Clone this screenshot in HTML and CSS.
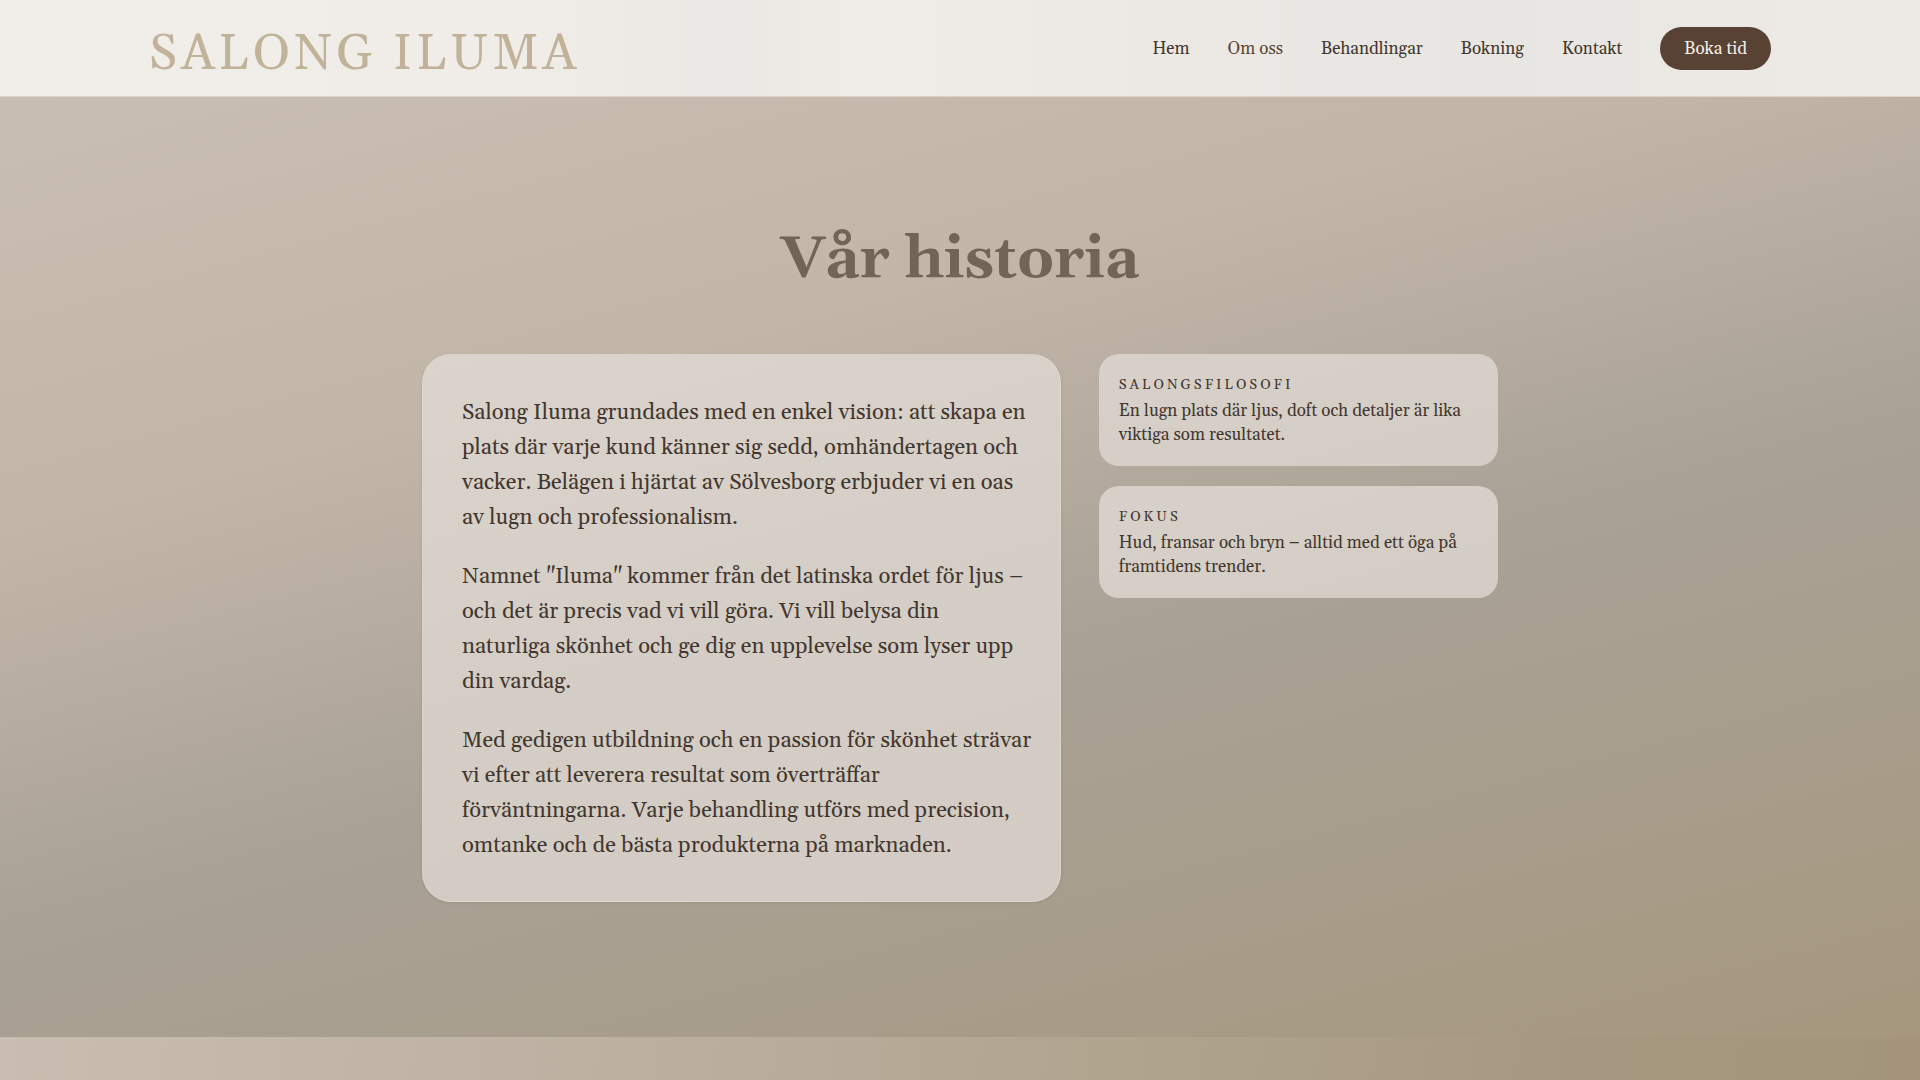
FILE: index.html
```html
<!DOCTYPE html>
<html lang="sv">

<head>
  <meta charset="UTF-8">
  <meta name="viewport" content="width=device-width, initial-scale=1.0">
  <title>Salong Iluma</title>
  <link rel="stylesheet" href="styles.css">
</head>

<body>
  <header class="header">
    <a href="#" class="logo">SALONG ILUMA</a>
    <nav class="nav">
      <a href="#hem">Hem</a>
      <a href="#om-oss" class="active">Om oss</a>
      <a href="#behandlingar">Behandlingar</a>
      <a href="#bokning">Bokning</a>
      <a href="#kontakt">Kontakt</a>
      <a href="#bokning" class="nav-btn">Boka tid</a>
    </nav>
  </header>
  <main>
    <section class="history" id="om-oss">
      <h2>Vår historia</h2>
      <div class="history-grid">
        <article class="story">
          <p>Salong Iluma grundades med en enkel vision: att skapa en plats där varje kund känner sig sedd, omhändertagen och vacker. Belägen i hjärtat av Sölvesborg erbjuder vi en oas av lugn och professionalism.</p>
          <p>Namnet "Iluma" kommer från det latinska ordet för ljus – och det är precis vad vi vill göra. Vi vill belysa din<br> naturliga skönhet och ge dig en upplevelse som lyser upp din vardag.</p>
          <p>Med gedigen utbildning och en passion för skönhet strävar vi efter att leverera resultat som överträffar förväntningarna. Varje behandling utförs med precision, omtanke och de bästa produkterna på marknaden.</p>
        </article>
        <aside class="facts">
          <div class="fact">
            <h3>Salongsfilosofi</h3>
            <p>En lugn plats där ljus, doft och detaljer är lika viktiga som resultatet.</p>
          </div>
          <div class="fact">
            <h3>Fokus</h3>
            <p>Hud, fransar och bryn – alltid med ett öga på framtidens trender.</p>
          </div>
        </aside>
      </div>
    </section>
    <section class="next"></section>
  </main>
</body>

</html>
```

FILE: styles.css
```css
* {
  margin: 0;
  padding: 0;
  box-sizing: border-box;
}

body {
  display: flex;
  flex-direction: column;
  min-height: 100vh;

  font-family: Georgia, Gelasio, "Liberation Serif", serif;
  color: #43362d;
  background-color: #c4b7a9;
}

main {
  display: flex;
  flex-direction: column;
  flex: 1;
}

.header {
  display: flex;
  align-items: center;
  justify-content: space-between;

  height: 97px;
  padding: 0 149px;
  border-bottom: 1px solid #dcd4ca;

  background: linear-gradient(90deg, #f0eee9 0%, #f0ede8 28%, #e9e8e4 38%, #f0ede8 45%, #ece9e5 60%, #e7e6e2 78%, #ece9e5 90%, #edeae5 100%);
}

.logo {
  padding-top: 14px;

  color: #c1b29a;
  font-size: 50px;
  letter-spacing: 4px;
  line-height: 60px;
  text-decoration: none;
}

.nav {
  display: flex;
  align-items: center;
  gap: 38px;
}

.nav a {
  padding-top: 2px;

  color: #43362d;
  font-size: 17px;
  line-height: 24px;
  text-decoration: none;
}

.nav .active {
  color: #5c4636;
}

.nav .nav-btn {
  padding: 10px 24px 9px;
  border-radius: 22px;

  background-color: #574233;
  color: #f3eee8;
}

.history {
  padding: 123px 40px 135px;

  background: linear-gradient(165deg, #c9beb2 0%, #c2b6a8 30%, #a9a196 58%, #a89d8a 80%, #a6977e 100%);
}

.history h2 {
  margin-bottom: 54px;

  color: #726458;
  font-size: 58px;
  line-height: 80px;
  text-align: center;
}

.history-grid {
  display: grid;
  grid-template-columns: 8fr 5fr;
  align-items: start;
  gap: 38px;

  max-width: 1076px;
  margin: 0 auto;
}

.story {
  display: flex;
  flex-direction: column;
  gap: 24px;

  padding: 41px 26px 37px 39px;
  border: 1px solid rgba(255, 255, 255, 0.15);
  border-radius: 29px;

  background: linear-gradient(165deg, #dbd4cd 0%, #d4cec7 50%, #d3cbc4 100%);
  box-shadow: 0 1px 3px rgba(80, 65, 50, 0.15);

  font-size: 22px;
  line-height: 35px;
}

.facts {
  display: flex;
  flex-direction: column;
  gap: 20px;
}

.fact {
  padding: 21px 20px 19px;
  border-radius: 20px;

  background: linear-gradient(165deg, #d7d1ca 0%, #d3cdc5 100%);
}

.fact h3 {
  margin-bottom: 4px;

  font-size: 14px;
  font-weight: 400;
  letter-spacing: 3px;
  line-height: 20px;
  text-transform: uppercase;
}

.fact p {
  font-size: 17px;
  line-height: 24px;
}

.next {
  flex: 1;

  background: linear-gradient(100deg, #c9bdb1 0%, #c0b3a5 25%, #b6aa98 45%, #aea18a 65%, #a69880 82%, #a4947c 100%);
}
```
